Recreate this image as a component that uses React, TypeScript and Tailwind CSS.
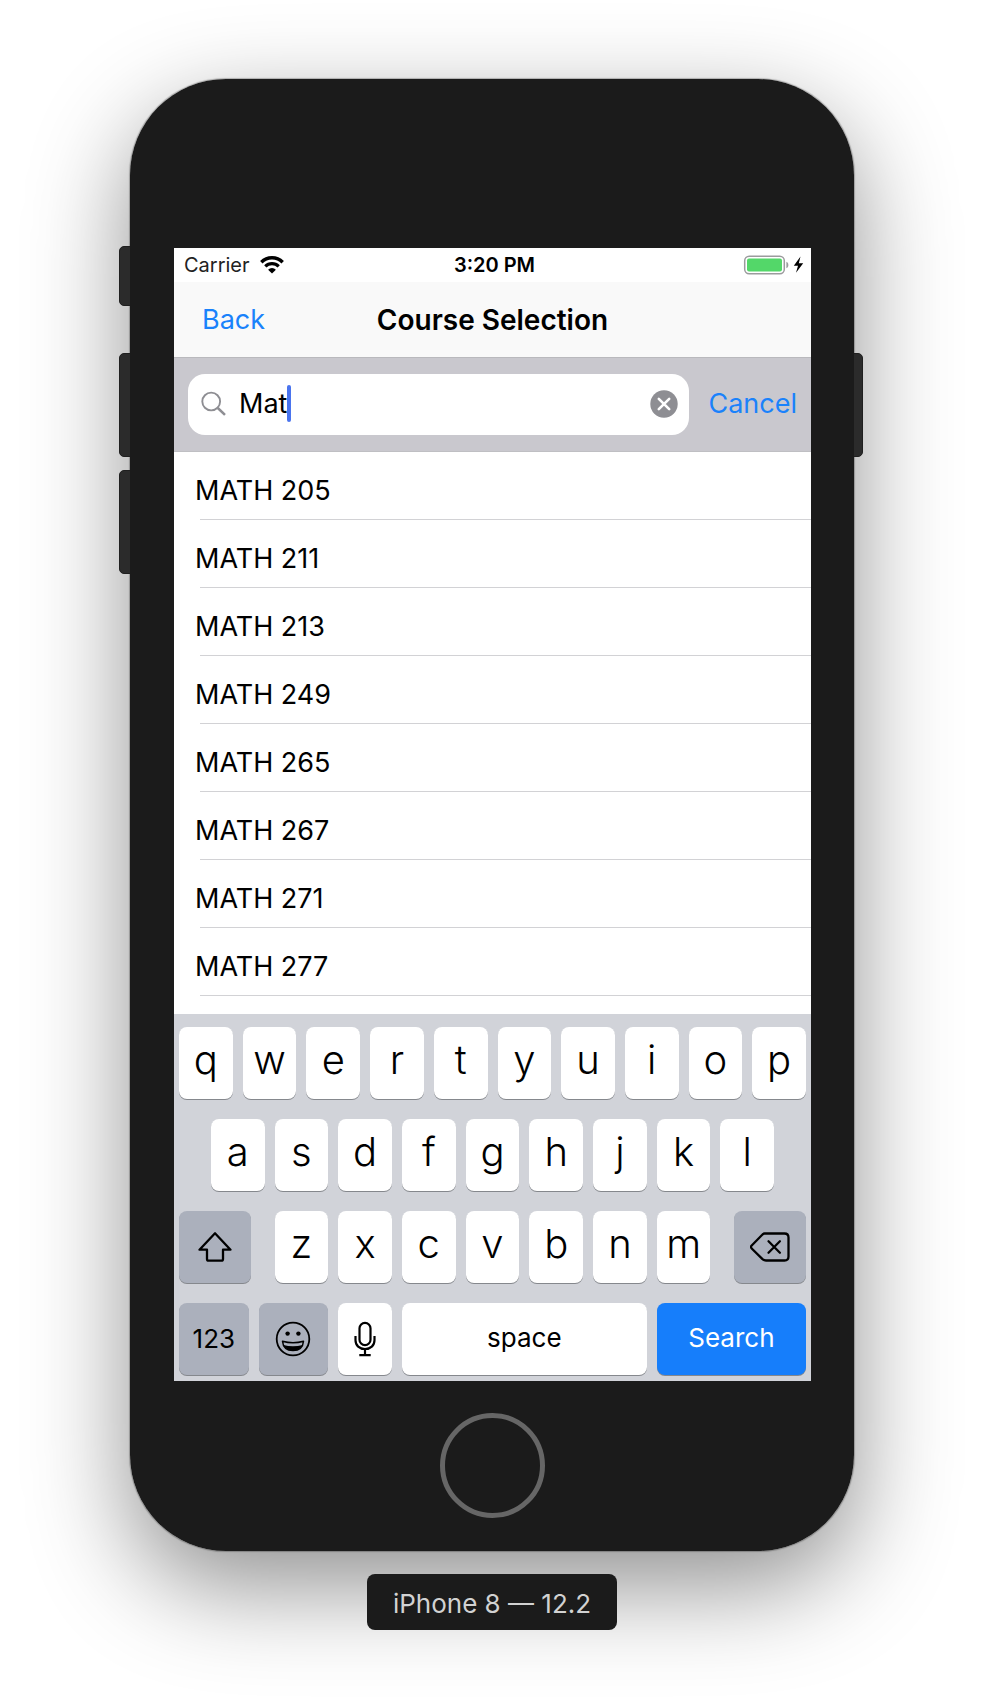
import React, { useState } from "react";

const courses = ["205", "211", "213", "249", "265", "267", "271", "277"].map((n) => `MATH ${n}`);

const keyBase = "flex h-[72px] items-center justify-center rounded-lg shadow-[0_1px_0_#85888d]";
const lightKey = `${keyBase} bg-white text-black`;
const darkKey = `${keyBase} bg-[#abb0bc] text-black`;

function LetterKey({ letter, className = "" }: { letter: string; className?: string }) {
  return (
    <button
      type="button"
      className={`${lightKey} col-span-2 pb-[6px] text-[40px] leading-none font-light ${className}`}
    >
      {letter}
    </button>
  );
}

function StatusBar() {
  return (
    <div className="grid h-[34px] grid-cols-3 items-center bg-white pr-[6px] pl-[10px] text-[20px] leading-6 text-black">
      <div className="flex items-center gap-[10px]">
        <span className="text-[#222]">Carrier</span>
        <svg width="24" height="18" viewBox="0 0 24 18" fill="none" stroke="#000" strokeWidth="3.4" aria-label="Wi-Fi">
          <path d="M1.3 6.2a15.2 15.2 0 0 1 21.4 0" />
          <path d="M5.3 10.3a9.5 9.5 0 0 1 13.4 0" strokeWidth="3.2" />
          <path d="M12 17.6 8.1 13.7a5.5 5.5 0 0 1 7.8 0z" fill="#000" stroke="none" />
        </svg>
      </div>
      <div className="text-center font-semibold">3:20 PM</div>
      <div className="flex items-center justify-end">
        <svg width="62" height="20" viewBox="0 0 62 20" aria-label="Battery charging">
          <rect x="1.7" y="1.2" width="39.6" height="17.6" rx="4.5" fill="#fff" stroke="#9b9b9d" strokeWidth="1.5" />
          <rect x="4" y="3.5" width="35" height="13" rx="2" fill="#53d769" />
          <path d="M43.4 6.8c2.6.8 2.6 5.6 0 6.4z" fill="#9b9b9d" />
          <path d="M57.5 1.5 50.8 10.8h4.2l-2 7 7.2-9.600h-4.400z" fill="#000" />
        </svg>
      </div>
    </div>
  );
}

function SearchBar() {
  const [query, setQuery] = useState("Mat");
  return (
    <form
      className="flex items-center gap-[19px] border-b border-[#bfbfc3] bg-[#c9c8ce] px-[14px] py-4"
      onSubmit={(e) => e.preventDefault()}
    >
      <div className="flex h-[61px] min-w-0 flex-1 items-center rounded-[17px] bg-white pr-[11px] pb-[2px] pl-[13px]">
        <label htmlFor="course-search" className="mr-3" aria-label="Search courses">
          <svg width="26" height="26" viewBox="0 0 26 26" fill="none" stroke="#8e8e93" aria-hidden="true">
            <circle cx="10.2" cy="10.5" r="8.9" strokeWidth="1.9" />
            <path d="m16.8 17 7.2 6.8" strokeWidth="2.5" />
          </svg>
        </label>
        <input
          id="course-search"
          type="text"
          value={query}
          onChange={(e) => setQuery(e.target.value)}
          className="field-sizing-content bg-transparent text-[27px] leading-9 text-black caret-transparent outline-none"
        />
        <span className="h-[37px] w-1 shrink-0 rounded-sm bg-[#4a74ee]" />
        <button type="button" aria-label="Clear text" className="ml-auto" onClick={() => setQuery("")}>
          <svg width="28" height="28" viewBox="0 0 28 28" aria-hidden="true">
            <circle cx="14" cy="14" r="13.7" fill="#8e8e93" />
            <path d="m8.8 8.8 10.4 10.4M19.2 8.8 8.8 19.2" stroke="#fff" strokeWidth="2.6" strokeLinecap="round" />
          </svg>
        </button>
      </div>
      <button type="button" className="pb-[2px] text-[27px] leading-9 text-[#1a82fb]">
        Cancel
      </button>
    </form>
  );
}

function Keyboard() {
  return (
    <div className="grid grid-cols-20 gap-x-[10px] gap-y-5 bg-[#d1d3d9] px-[5px] pt-[13px] pb-[6px]">
      {"qwertyuiop".split("").map((l) => (
        <LetterKey key={l} letter={l} />
      ))}
      {"asdfghjkl".split("").map((l) => (
        <LetterKey key={l} letter={l} className={l === "a" ? "col-start-2" : ""} />
      ))}
      <button type="button" aria-label="Shift" className={`${darkKey} col-span-3 col-start-1 mr-[14px]`}>
        <svg width="34" height="30" viewBox="0 0 34 30" fill="none" stroke="#000" strokeWidth="2.3" strokeLinejoin="round" aria-hidden="true">
          <path d="M17 1.3 1.5 17.7H9V27q0 1.7 1.7 1.7h12.6Q25 28.7 25 27v-9.3h7.5z" />
        </svg>
      </button>
      {"zxcvbnm".split("").map((l) => (
        <LetterKey key={l} letter={l} />
      ))}
      <button type="button" aria-label="Delete" className={`${darkKey} col-span-3 ml-[14px]`}>
        <svg width="40" height="30" viewBox="0 0 40 30" fill="none" stroke="#000" strokeWidth="2.3" strokeLinejoin="round" strokeLinecap="round" aria-hidden="true">
          <path d="M14.500 1.500H34.500q4 0 4 4v19q0 4-4 4H16q-2 0-3.500-1.400L1.700 16.500q-1.500-1.500 0-3L12 3q1.200-1.500 2.500-1.500z" />
          <path d="m18.500 9.300 11.400 11.400M29.900 9.300 18.500 20.700" />
        </svg>
      </button>
      <div className="col-span-5 grid grid-cols-2 gap-[10px]">
        <button type="button" className={`${darkKey} text-[26px] leading-8`}>
          123
        </button>
        <button type="button" aria-label="Emoji" className={darkKey}>
          <svg width="36" height="36" viewBox="0 0 36 36" fill="none" stroke="#000" aria-hidden="true">
            <circle cx="18" cy="18" r="16.3" strokeWidth="1.8" />
            <circle cx="12.6" cy="12.6" r="2.2" fill="#000" stroke="none" />
            <circle cx="23.4" cy="12.6" r="2.2" fill="#000" stroke="none" />
            <path d="M7.500 20.200q10.500 3 21 0-.8 9.200-10.500 9.400-9.700-.2-10.500-9.400z" strokeWidth="1.5" strokeLinejoin="round" />
            <path d="M8.300 24q9.700 2.500 19.400 0-2.200 5.300-9.700 5.600-7.500-.3-9.700-5.600z" fill="#000" stroke="none" />
          </svg>
        </button>
      </div>
      <button type="button" aria-label="Dictate" className={`${lightKey} col-span-2`}>
        <svg width="22" height="36" viewBox="0 0 22 36" fill="none" stroke="#000" strokeWidth="2.2" aria-hidden="true">
          <rect x="5.5" y="1.8" width="11" height="22.4" rx="5.5" />
          <path d="M1.5 15v4.200c0 5.300 4 8.800 9.500 8.800s9.500-3.500 9.500-8.800V15M11 28v6M5.300 34.200h11.400" />
        </svg>
      </button>
      <button type="button" className={`${lightKey} col-span-8 pb-[2px] text-[26px] leading-8`}>
        space
      </button>
      <button type="submit" className={`${keyBase} col-span-5 bg-[#167efb] pb-[2px] text-[26px] leading-8 text-white`}>
        Search
      </button>
    </div>
  );
}

export default function App() {
  return (
    <main className="flex min-h-screen flex-col items-center bg-white px-8 pt-[79px] pb-[70px] font-['Inter',sans-serif]">
      <div className="relative w-full max-w-[724px] rounded-[96px] shadow-[0_0_1px_1px_rgba(0,0,0,0.25),0_35px_100px_rgba(0,0,0,0.44)]">
        <span className="absolute top-[167px] -left-[11px] h-[60px] w-5 rounded-[5px] border border-[#1f1f1f] bg-[#2b2b2b]" />
        <span className="absolute top-[274px] -left-[11px] h-[104px] w-5 rounded-[5px] border border-[#1f1f1f] bg-[#2b2b2b]" />
        <span className="absolute top-[391px] -left-[11px] h-[104px] w-5 rounded-[5px] border border-[#1f1f1f] bg-[#2b2b2b]" />
        <span className="absolute top-[274px] -right-[9px] h-[104px] w-5 rounded-[5px] border border-[#1f1f1f] bg-[#2b2b2b]" />
        <div className="relative flex flex-col rounded-[96px] bg-[#1b1b1b] pt-[169px] pr-[43px] pb-[33px] pl-[44px]">
          <div className="overflow-hidden bg-white">
            <StatusBar />
            <header className="grid grid-cols-[1fr_auto_1fr] items-center border-b border-[#b9b9bd] bg-[#f9f9f9] px-7 pt-5 pb-[19px] leading-9">
              <button type="button" className="justify-self-start text-[27px] text-[#1a82fb]">
                Back
              </button>
              <h1 className="text-[28px] font-semibold text-black">Course Selection</h1>
            </header>
            <SearchBar />
            <ul className="pb-[18px]">
              {courses.map((c) => (
                <li key={c} className="text-[27px] text-black">
                  <div className="pt-[21px] pb-[10px] pl-[21px] leading-9">{c}</div>
                  <div className="ml-[26px] h-px bg-[#d2d2d5]" />
                </li>
              ))}
            </ul>
            <Keyboard />
          </div>
          <button
            type="button"
            aria-label="Home"
            className="mt-8 h-[105px] w-[105px] self-center rounded-full border-[5px] border-[#666]"
          />
        </div>
      </div>
      <p className="relative mt-[23px] rounded-lg bg-[#1b1b1b] px-[26px] pt-[14px] pb-[10px] text-[26px] leading-8 text-[#d2d2d2]">
        iPhone 8 — 12.2
      </p>
    </main>
  );
}
